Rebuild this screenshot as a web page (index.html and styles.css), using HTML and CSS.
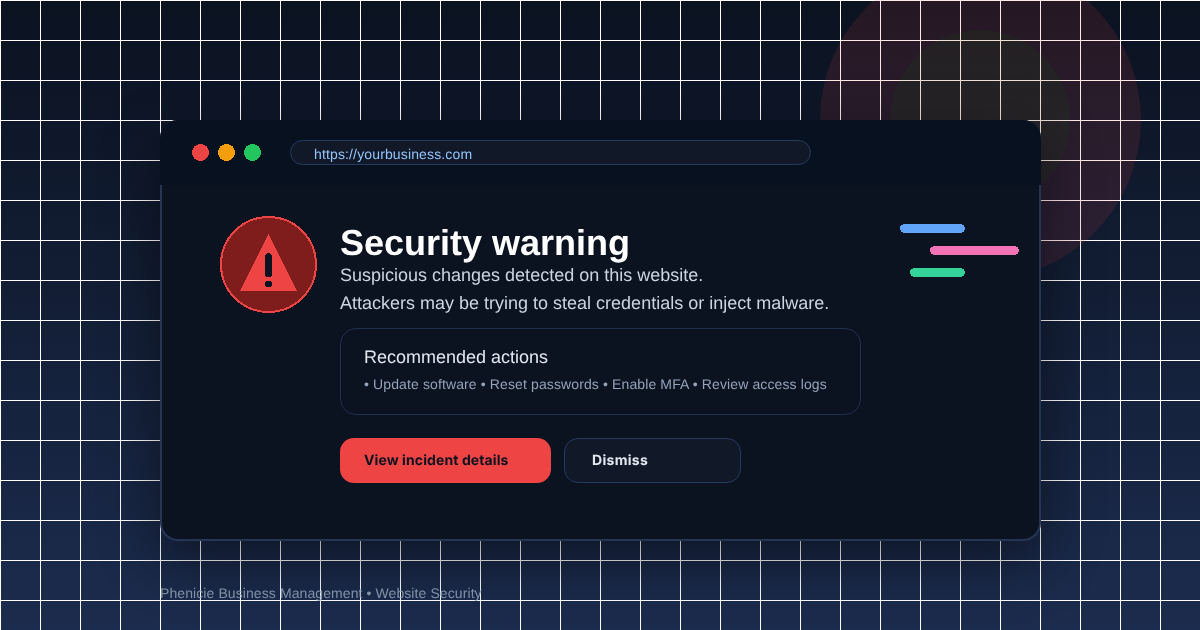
FILE: index.html
```html
<!DOCTYPE html>
<html lang="en">
<head>
  <meta charset="UTF-8" />
  <title>Security warning</title>
  <link rel="stylesheet" href="styles.css">
</head>
<body>
  <div class="glow glow-red"></div>
  <div class="glow glow-green"></div>
  <div class="card">
    <div class="topbar">
      <svg class="dots" width="69" height="17" viewBox="0 0 69 17">
        <circle cx="8.5" cy="8.5" r="8.5" fill="#ef4444" />
        <circle cx="34.5" cy="8.5" r="8.5" fill="#f59e0b" />
        <circle cx="60.5" cy="8.5" r="8.5" fill="#22c55e" />
      </svg>
      <div class="url">https://yourbusiness.com</div>
    </div>
    <div class="content">
      <svg class="alert-icon" width="98" height="98" viewBox="0 0 98 98">
        <circle cx="48.5" cy="48.5" r="47.5" fill="#7f1d1d" stroke="#ef4444" stroke-width="2" />
        <path d="M48.5 18 L77 75 H20 Z" fill="#ef4444" />
        <rect x="45" y="37" width="7" height="24" rx="3.5" fill="#0b1220" />
        <circle cx="48.5" cy="68" r="3.5" fill="#0b1220" />
      </svg>
      <div class="main">
        <h1>Security warning</h1>
        <p class="lead">Suspicious changes detected on this website.</p>
        <p class="lead">Attackers may be trying to steal credentials or inject malware.</p>
        <div class="actions">
          <h2>Recommended actions</h2>
          <p>• Update software • Reset passwords • Enable MFA • Review access logs</p>
        </div>
        <div class="buttons">
          <a class="btn primary">View incident details</a>
          <a class="btn ghost">Dismiss</a>
        </div>
      </div>
      <svg class="bars" width="119" height="53" viewBox="0 0 119 53">
        <rect x="0" y="0" width="65" height="9" rx="4.5" fill="#60a5fa" />
        <rect x="30" y="22" width="89" height="9" rx="4.5" fill="#f472b6" />
        <rect x="10" y="44" width="55" height="9" rx="4.5" fill="#34d399" />
      </svg>
    </div>
  </div>
  <div class="footer">Phenicie Business Management • Website Security</div>
</body>
</html>
```

FILE: styles.css
```css
* { box-sizing: border-box; }
html, body { height: 100%; }
body {
  margin: 0;
  padding: 120px 0 0 160px;
  overflow: hidden;
  position: relative;
  font-family: "Liberation Sans", Arial, sans-serif;
  text-rendering: geometricPrecision;
  background-color: #0b1220;
  background-image:
    linear-gradient(#fff 1px, transparent 1px),
    linear-gradient(90deg, #fff 1px, transparent 1px),
    linear-gradient(#0b1220, #1c2c4e);
  background-size: 40px 40px, 40px 40px, 100% 100%;
}
svg { shape-rendering: crispEdges; }

.glow { position: absolute; border-radius: 50%; }
.glow-red { left: 820px; top: -40px; width: 321px; height: 320px; background: rgba(239,68,68,.12); }
.glow-green { left: 890px; top: 30px; width: 180px; height: 180px; background: rgba(0,140,0,.07); }

.card {
  position: relative;
  width: 881px;
  height: 421px;
  background: #0b1220;
  border: 2px solid #243556;
  border-radius: 18px;
  box-shadow: 0 20px 60px rgba(0,0,0,.45);
  will-change: transform;
}

.topbar {
  display: flex;
  align-items: center;
  height: 65px;
  margin: -2px -2px 0;
  padding: 0 230px 0 32px;
  background: #07111f;
  border-radius: 18px 18px 0 0;
}
.dots { flex: none; margin-right: 29px; }
.url {
  flex: 1;
  height: 25px;
  padding-left: 23px;
  line-height: 26px;
  font-size: 14px;
  letter-spacing: .14px;
  color: #93c5fd;
  background: #111827;
  border: 1px solid #263a60;
  border-radius: 13px;
}

.content { display: flex; padding: 31px 0 0 58px; }
.alert-icon { flex: none; margin-right: 22px; }
.main { width: 521px; flex: none; padding-top: 9px; }

h1 {
  margin: 0;
  font-size: 36px;
  line-height: 36px;
  font-weight: bold;
  color: #fff;
}
.lead { margin: 0; font-size: 18px; line-height: 28px; color: #cbd5e1; }

.actions {
  margin-top: 11px;
  height: 87px;
  padding: 16px 23px 0;
  border: 1px solid #22304f;
  border-radius: 16px;
}
.actions h2 { margin: 0; font-size: 18px; line-height: 24px; font-weight: normal; color: #e2e8f0; }
.actions p { margin: 5px 0 0; font-size: 14px; line-height: 20px; letter-spacing: .12px; color: #94a3b8; }

.buttons { display: flex; gap: 13px; margin-top: 23px; }
.btn {
  display: block;
  height: 45px;
  line-height: 45px;
  font-family: Inter, sans-serif;
  font-size: 14px;
  font-weight: 700;
  letter-spacing: .1px;
  border-radius: 14px;
}
.btn.primary { width: 211px; padding-left: 24px; background: #ef4444; color: #0b1220; }
.btn.ghost { width: 177px; padding-left: 27px; line-height: 43px; letter-spacing: .3px; background: #111827; color: #e2e8f0; border: 1px solid #263a60; }

.bars { flex: none; margin: 8px 0 0 39px; }

.footer { margin-top: 43px; font-size: 14px; line-height: 18px; letter-spacing: .09px; color: #94a3b8; opacity: .85; }
```
